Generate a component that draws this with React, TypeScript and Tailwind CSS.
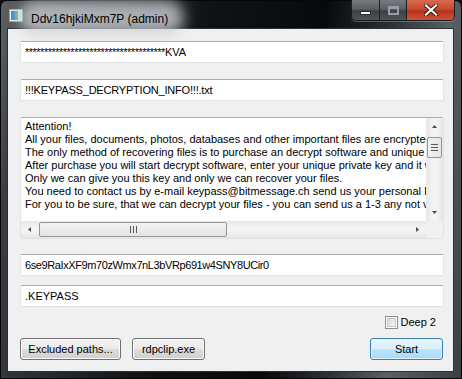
const FONT = "font-['Liberation_Sans',Arial,sans-serif]";

const LINES = [
  "Attention!",
  "All your files, documents, photos, databases and other important files are encrypted with strongest encryption and unique key.",
  "The only method of recovering files is to purchase an decrypt software and unique private key.",
  "After purchase you will start decrypt software, enter your unique private key and it will decrypt all your data.",
  "Only we can give you this key and only we can recover your files.",
  "You need to contact us by e-mail keypass@bitmessage.ch send us your personal ID and wait for further instructions.",
  "For you to be sure, that we can decrypt your files - you can send us a 1-3 any not very big encrypted files and we will send back it in a original form FREE.",
];

export default function App() {
  return (
    <div className={`w-[462px] h-[379px] bg-[#0e1012] ${FONT}`}>
      <div className="relative w-[462px] h-[379px] rounded-t-[7px] border border-[#050607] bg-[linear-gradient(100deg,#5e6368_0%,#3a3e42_7%,#101214_40%,#08090a_62%,#2a2e32_74%,#5a5f64_86%,#3b3f43_100%)] flex flex-col">
        <TitleBar />
        <div className="ml-[6px] mr-[7px] h-[344px] bg-[#f0f0f0] border border-[#2b2f33] flex flex-col pt-[12px] pl-[12px] pr-[9px]">
          <Field>
            <span className="tracking-[-0.5px]">{"*".repeat(37)}</span>KVA
          </Field>
          <Field className="mt-[16px] tracking-[-0.2px]">!!!KEYPASS_DECRYPTION_INFO!!!.txt</Field>
          <TextArea />
          <Field className="mt-[15px] tracking-[-0.4px]">6se9RaIxXF9m70zWmx7nL3bVRp691w4SNY8UCir0</Field>
          <Field className="mt-[9px]">.KEYPASS</Field>
          <div className="mt-[9px] h-[13px] flex items-center justify-end pr-[8px] gap-[3px]">
            <div className="w-[13px] h-[13px] border border-[#8e8f8f] bg-white p-[1px]">
              <div className="w-full h-full bg-[linear-gradient(135deg,#d6d6d6,#f6f6f6)] border border-[#c7c7c7]" />
            </div>
            <span className="text-[11px] leading-none text-black">Deep 2</span>
          </div>
          <div className="mt-[9px] flex items-center">
            <Button className="w-[101px]">Excluded paths...</Button>
            <Button className="w-[73px] ml-[11px]">rdpclip.exe</Button>
            <Button primary className="w-[73px] ml-auto mr-[1px]">Start</Button>
          </div>
        </div>
      </div>
    </div>
  );
}

function TitleBar() {
  return (
    <div className="h-[27px] flex items-start pl-[8px]">
      <div className="mt-[8px] w-[14px] h-[13px]">
        <svg width="14" height="13" viewBox="0 0 14 13">
          <rect x="0.5" y="0.5" width="13" height="12" fill="#e8eaec" stroke="#9aa0a6" />
          <rect x="2" y="2" width="4" height="9" fill="#3f8fc9" />
          <rect x="6" y="2" width="3" height="9" fill="#5bb08a" />
          <rect x="9" y="2" width="3" height="9" fill="#cfe3ee" />
        </svg>
      </div>
      <div className="relative ml-[8px] mt-[5px]">
        <div className="absolute -left-[12px] -right-[16px] -top-[6px] -bottom-[5px] rounded-full bg-[#cdd1d5]/80 blur-[7px]" />
        <span className="relative text-[12px] leading-[16px] text-black">Ddv16hjkiMxm7P (admin)</span>
      </div>
      <div className="ml-auto mr-[6px] -mt-[1px] flex h-[21px] rounded-b-[5px] border border-[#1a1d20] border-t-0 overflow-hidden shadow-[0_1px_0_rgba(255,255,255,0.25)]">
        <div className="w-[28px] flex items-center justify-center bg-[linear-gradient(#767b80,#5b6065_45%,#3d4146_55%,#4e5358)] border-r border-[#1e2124]">
          <div className="w-[11px] h-[4px] bg-white border border-[#2a2d30] mt-[5px]" />
        </div>
        <div className="w-[27px] flex items-center justify-center bg-[linear-gradient(#767b80,#5b6065_45%,#3d4146_55%,#4e5358)] border-r border-[#1e2124]">
          <div className="w-[11px] h-[9px] border-[2px] border-[#9a9ea2] border-t-[3px]" />
        </div>
        <div className="w-[47px] flex items-center justify-center bg-[linear-gradient(#d86a52,#c94a31_45%,#b3321b_55%,#cf5236)]">
          <svg width="14" height="12" viewBox="0 0 14 12">
            <path d="M2 1.5 L12 10.5 M12 1.5 L2 10.5" stroke="#3a1208" strokeWidth="4" strokeLinecap="square" />
            <path d="M2 1.5 L12 10.5 M12 1.5 L2 10.5" stroke="#ffffff" strokeWidth="2.2" strokeLinecap="square" />
          </svg>
        </div>
      </div>
    </div>
  );
}

function Field({ children, className = "" }: { children: React.ReactNode; className?: string }) {
  return (
    <div className={`h-[22px] shrink-0 bg-white border border-[#dfe3e8] border-t-[#abadb3] rounded-[2px] flex items-center pl-[4px] text-[11px] text-black whitespace-nowrap overflow-hidden ${className}`}>
      {children}
    </div>
  );
}

function TextArea() {
  return (
    <div className="mt-[16px] h-[122px] shrink-0 bg-white border border-[#dfe3e8] border-t-[#abadb3] rounded-[2px] grid grid-cols-[1fr_17px] grid-rows-[1fr_17px] overflow-hidden">
      <div className="overflow-hidden pl-[4px] pt-[2px] text-[11px] leading-[13px] text-black whitespace-nowrap">
        {LINES.map((l, i) => (
          <div key={i}>{l}</div>
        ))}
      </div>
      <div className="flex flex-col bg-[linear-gradient(90deg,#e6e6e6,#f4f4f4_40%,#f4f4f4_60%,#e6e6e6)]">
        <ArrowBtn dir="up" />
        <div className="mt-[2px] mx-[1px] h-[21px] rounded-[2px] border border-[#969696] bg-[linear-gradient(90deg,#f2f2f2,#e4e4e4)] flex flex-col items-center justify-center gap-[2px]">
          <div className="w-[7px] h-px bg-[#5a5a5a]" />
          <div className="w-[7px] h-px bg-[#5a5a5a]" />
          <div className="w-[7px] h-px bg-[#5a5a5a]" />
        </div>
        <div className="flex-1" />
        <ArrowBtn dir="down" />
      </div>
      <div className="flex bg-[linear-gradient(#e6e6e6,#f4f4f4_40%,#f4f4f4_60%,#e6e6e6)]">
        <ArrowBtn dir="left" />
        <div className="my-[1px] ml-[1px] w-[188px] rounded-[2px] border border-[#969696] bg-[linear-gradient(#f2f2f2,#e4e4e4)] flex items-center justify-center gap-[2px]">
          <div className="w-px h-[7px] bg-[#5a5a5a]" />
          <div className="w-px h-[7px] bg-[#5a5a5a]" />
          <div className="w-px h-[7px] bg-[#5a5a5a]" />
        </div>
        <div className="flex-1" />
        <ArrowBtn dir="right" />
      </div>
      <div className="bg-[#f0f0f0]" />
    </div>
  );
}

function ArrowBtn({ dir }: { dir: "up" | "down" | "left" | "right" }) {
  const paths = {
    up: "M2 5 L4.5 2 L7 5 Z",
    down: "M2 2 L4.5 5 L7 2 Z",
    left: "M5 1 L2 3.5 L5 6 Z",
    right: "M2 1 L5 3.5 L2 6 Z",
  };
  const vertical = dir === "up" || dir === "down";
  return (
    <div className="w-[17px] h-[17px] shrink-0 flex items-center justify-center">
      <svg width={vertical ? 9 : 7} height={7} viewBox={vertical ? "0 0 9 7" : "0 0 7 7"}>
        <path d={paths[dir]} fill="#4d4d4d" />
      </svg>
    </div>
  );
}

function Button({ children, className = "", primary = false }: { children: React.ReactNode; className?: string; primary?: boolean }) {
  return (
    <div
      className={`h-[22px] rounded-[3px] border flex items-center justify-center text-[11px] text-black ${
        primary
          ? "border-[#3c7fb1] bg-[linear-gradient(#eaf6fd,#d9f0fc_50%,#bee6fd_50%,#a7d9f5)] shadow-[inset_0_0_0_1px_#dff3fd]"
          : "border-[#707070] bg-[linear-gradient(#f2f2f2,#ebebeb_50%,#dddddd_50%,#cfcfcf)] shadow-[inset_0_0_0_1px_#fcfcfc]"
      } ${className}`}
    >
      {children}
    </div>
  );
}
